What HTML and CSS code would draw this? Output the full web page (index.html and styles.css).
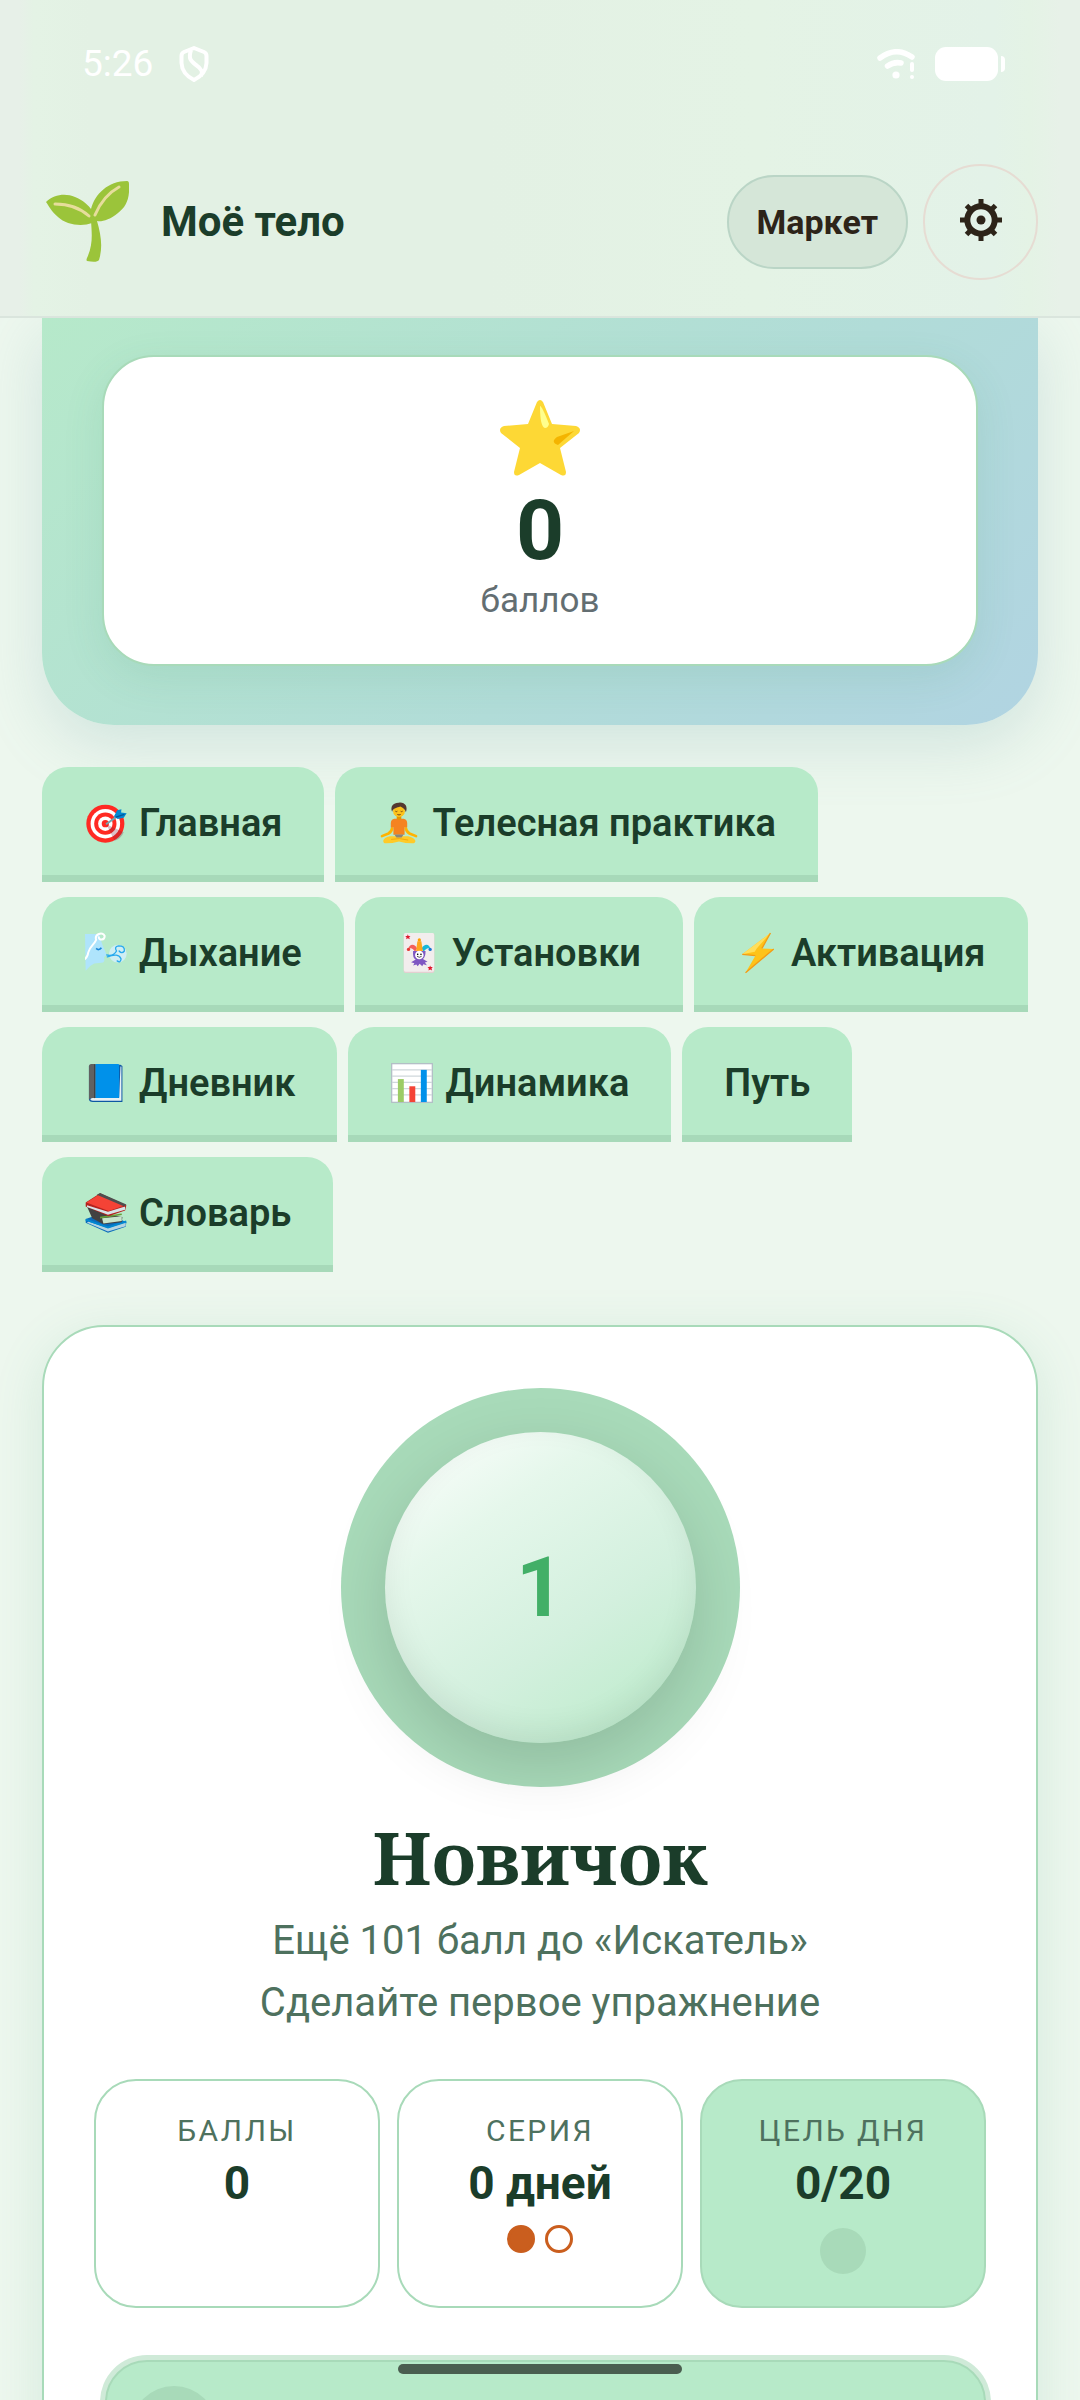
FILE: index.html
```html
<!DOCTYPE html>
<html lang="ru">
<head>
<meta charset="utf-8">
<meta name="viewport" content="width=device-width, initial-scale=1">
<title>Моё тело</title>
<link rel="stylesheet" href="styles.css">
</head>
<body>
<div class="app">
  <header class="header">
    <div class="status">
      <span class="status-time">5:26</span>
      <svg class="status-shield" viewBox="0 0 30 36" fill="none" stroke="#fff" stroke-width="4" stroke-linejoin="round"><path d="M15 2 L25 6 Q27.500 7 27.500 10 V17 Q27 28 15 34 Q3 28 2.500 17 V10 Q2.500 7 5 6 Z"/><path d="M12 4 C9 13 12 15 17 19 C23 23 24 26 22 30"/></svg>
      <svg class="status-wifi" viewBox="0 0 38 30" fill="none" stroke="#fff" stroke-linecap="round"><path d="M3 9 Q19 -3 35 8" stroke-width="5.500"/><path d="M10.500 17 Q17 12.500 24 14" stroke-width="5.500"/><circle cx="19" cy="26" r="3.600" fill="#fff" stroke="none"/><path d="M35 15 V21" stroke-width="4"/><circle cx="35" cy="28" r="2" fill="#fff" stroke="none"/></svg>
      <svg class="status-battery" viewBox="0 0 70 34" fill="#fff"><rect width="63" height="34" rx="11"/><path d="M66 9 Q70 9 70 13 V21 Q70 25 66 25 Z"/></svg>
    </div>
    <div class="topbar">
      <svg class="logo" viewBox="0 0 83 82" aria-hidden="true"><g fill="#9bc43a"><path d="M45 40 H51 C55 54 57 66 53 79 Q51 82 41 80 Q40 79 41 77 C47 64 46 54 45 40 Z"/><path d="M46 42 C36 46 20 44 12 36 C5 30 3 25 0 21 C8 13 20 12 29 16 C37 19 43 25 45 28 C49 13 62 0 81 0 Q83 0 83 3 C84 18 80 26 72 32 C64 39 55 41 51 40 Z"/></g><path d="M9 23 C22 23 33 26 43 35 M49 34 C54 22 62 12 73 6" fill="none" stroke="#e6dd9b" stroke-width="3" stroke-linecap="round"/></svg>
      <h1 class="brand">Моё тело</h1>
      <button class="market" type="button">Маркет</button>
      <button class="settings" type="button" aria-label="Настройки"><svg viewBox="0 0 42 42" fill="none" stroke="#2d2419"><circle cx="21" cy="21" r="13.700" stroke-width="6"/><path d="M21 0 V7 M21 35 V42 M0 21 H7 M35 21 H42 M6.500 6.500 L11 11 M31 31 L35.500 35.500 M35.500 6.500 L31 11 M11 31 L6.500 35.500" stroke-width="5"/><circle cx="21" cy="21" r="4.500" fill="#2d2419" stroke="none"/></svg></button>
    </div>
  </header>

  <main class="content">
    <section class="hero">
      <div class="score">
        <svg class="score-star" viewBox="0 0 80 76"><path d="M37 2 Q40 -2 43 2 L52 24 L76 26 Q82 28 79 33 L60 48 L66 72 Q66 77 61 75 L40 63 L19 75 Q14 77 14 72 L20 48 L1 33 Q-2 28 4 26 L28 24 Z" fill="#fdd835"/><path d="M40 6 Q42 6 49 24 Q48 28 45 28 Q40 27 40 6 Z" fill="#ffff8d"/><path d="M74 31 L58 45 Q50 42 57 37 Z" fill="#f4b400"/></svg>
        <strong class="score-value">0</strong>
        <span class="score-label">баллов</span>
      </div>
    </section>

    <nav class="tabs">
      <button class="tab" type="button"><svg viewBox="0 0 128 128"><circle cx="62" cy="66" r="58" fill="#ff2a23"/><circle cx="62" cy="66" r="45" fill="#fff"/><circle cx="62" cy="66" r="34" fill="#ff2a23"/><circle cx="62" cy="66" r="22" fill="#fff"/><circle cx="62" cy="66" r="11" fill="#ff2a23"/><path d="M65 68 L118 92 Q110 112 90 118 Z" fill="#7b1d3b" opacity=".28"/><path d="M64 68 L104 40" stroke="#78a3ad" stroke-width="6"/><path d="M88 44 L98 25 L111 22 L110 32 L127 34 L118 48 L100 52 Z" fill="#0288d1"/><path d="M94 46 L120 38" stroke="#01579b" stroke-width="4"/></svg>Главная</button>
      <button class="tab" type="button"><svg viewBox="0 0 128 128"><path d="M43 80 Q42 90 32 96 L12 104 M85 80 Q86 90 96 96 L116 104" fill="none" stroke="#ffb300" stroke-width="8" stroke-linecap="round"/><path d="M16 118 Q18 108 36 104 H92 Q110 108 114 118 Q114 126 104 126 Q84 126 64 120 Q44 126 24 126 Q16 126 16 118 Z" fill="#ffca28"/><path d="M39 64 Q40 52 50 51 H78 Q88 52 89 64 V78 L81 77 V100 H47 V77 L39 78 Z" fill="#f58320"/><path d="M50 99 H78 L72 108 H56 Z" fill="#8c857a"/><path d="M40 114 Q64 108 92 116" fill="none" stroke="#f2a90c" stroke-width="3"/><path d="M57 40 H71 V52 Q64 57 57 52 Z" fill="#e59600"/><circle cx="64" cy="28" r="18" fill="#fcc21b"/><path d="M43 30 C36 12 48 1 64 2 C82 0 92 14 85 31 C83 22 76 18 68 14 C58 18 46 18 43 30 Z" fill="#543930"/><path d="M53 28 Q56 31 59 28 M69 28 Q72 31 75 28 M59 38 Q64 41 69 38" fill="none" stroke="#704214" stroke-width="3"/></svg>Телесная практика</button>
      <button class="tab" type="button"><svg viewBox="0 0 128 128"><path d="M0 6 H44 Q50 34 58 50 L66 70 L58 76 Q62 94 50 94 L28 96 Q14 102 2 118 Z" fill="#afe4fc"/><path d="M34 24 C28 6 54 -2 60 12 C60 26 42 26 42 16 M34 24 C28 38 14 44 10 62 Q8 76 0 82" fill="none" stroke="#fff" stroke-width="6" stroke-linecap="round"/><path d="M34 50 Q42 58 50 48" fill="none" stroke="#1b87d8" stroke-width="5"/><circle cx="100" cy="66" r="27" fill="#d4efff" opacity=".8"/><path d="M66 70 Q86 76 96 58 Q88 44 102 42 Q122 42 120 58 Q112 68 104 58 M68 76 Q102 62 110 82 Q108 96 98 88" fill="none" stroke="#29a9ee" stroke-width="4" stroke-linecap="round"/></svg>Дыхание</button>
      <button class="tab" type="button"><svg viewBox="0 0 128 128"><rect x="17" y="3" width="94" height="122" rx="6" fill="#e4cfd0"/><rect x="18" y="3" width="92" height="118" rx="5" fill="#f2eded"/><g fill="#e0182d"><path d="M30 7 l2 5 6 0 -4 4 2 6 -6 -3 -5 3 1 -6 -4 -4 6 0z"/><path d="M98 102 l2 5 6 0 -4 4 2 6 -6 -3 -5 3 1 -6 -4 -4 6 0z"/></g><path d="M52 60 C46 50 38 46 32 53 C32 36 52 34 58 50 Z" fill="#f4605a"/><path d="M78 60 C86 50 92 46 98 53 C98 36 80 34 72 50 Z" fill="#18b8d8"/><circle cx="32" cy="53" r="5" fill="#e53935"/><circle cx="98" cy="53" r="5" fill="#1976d2"/><path d="M55 60 L59 28 H71 L76 60 Z" fill="#ffa51d"/><circle cx="65" cy="24" r="5" fill="#ffa000"/><path d="M46 58 Q44 80 54 84 L40 92 L50 95 L46 102 L56 99 L60 104 L66 97 L74 104 L77 98 L88 101 L82 93 L90 91 L76 82 Q84 76 84 58 Z" fill="#7e57c2"/><ellipse cx="65" cy="70" rx="13" ry="13" fill="#fff"/><circle cx="60" cy="68" r="2.500"/><circle cx="70" cy="68" r="2.500"/><path d="M58 74 Q65 80 72 74" fill="none" stroke="#333" stroke-width="2.500"/></svg>Установки</button>
      <button class="tab" type="button"><svg viewBox="0 0 128 128"><path d="M102 3 L16 68 L56 72 L26 124 L112 52 L76 50 Z" fill="#fec31a"/><path d="M102 3 L60 50 L54 60 L16 68 Z" fill="#ffdf5b"/><path d="M102 3 L76 50 M16 68 L56 72 M26 124 L112 52" fill="none" stroke="#f39b16" stroke-width="4"/></svg>Активация</button>
      <button class="tab" type="button"><svg viewBox="0 0 128 128"><path d="M17 8 H108 L114 12 V122 H24 Q12 122 12 112 V12 Z" fill="#0d57a3"/><path d="M108 14 H111 V118 H24 Q16 118 16 113 Q18 110 24 110 H104 Z" fill="#e8f1f5"/><rect x="30" y="6" width="74" height="104" rx="4" fill="#0091ea"/><path d="M12 12 Q13 6 19 6 H32 V110 H21 Q14 110 12 116 Z" fill="#616161"/><path d="M29 7 V110" stroke="#424242" stroke-width="3"/></svg>Дневник</button>
      <button class="tab" type="button"><svg viewBox="0 0 128 128"><rect x="2" y="5" width="124" height="118" fill="#fff" stroke="#b3bfc6" stroke-width="4"/><path d="M3 24 H125 M3 43 H125 M3 62 H125 M3 81 H125 M3 100 H125" stroke="#cfd8dc" stroke-width="4"/><rect x="21" y="52" width="18" height="70" fill="#9ccc65"/><rect x="56" y="74" width="18" height="48" fill="#f44336"/><rect x="91" y="24" width="18" height="98" fill="#0091ea"/></svg>Динамика</button>
      <button class="tab" type="button" aria-current="page">Путь</button>
      <button class="tab" type="button"><svg viewBox="0 0 128 128"><path d="M2 82 L62 62 L126 92 L124 106 L70 124 L2 94 Z" fill="#0b6bbb"/><path d="M10 90 L70 110 L124 92 V104 L70 120 L6 94 Z" fill="#b6d4e0"/><path d="M2 84 L70 108 L126 90" fill="none" stroke="#0288d1" stroke-width="6"/><path d="M6 44 L84 70 L114 76 L112 92 L56 98 L22 80 Z" fill="#424242"/><path d="M52 80 L112 74 V88 L56 96 Z" fill="#c7e5cb"/><path d="M46 78 L112 68" stroke="#689f38" stroke-width="5"/><path d="M46 4 L126 40 L122 56 L72 74 L2 44 V32 Z" fill="#b3221e"/><path d="M6 40 L70 60 L122 44 V54 L70 69 L6 46 Z" fill="#d8e3e7"/><path d="M46 6 L124 40 L72 58 L4 32 Z" fill="#f44336"/><path d="M36 8 L46 3 L126 38 L120 44 Z" fill="#4e4e4e"/></svg>Словарь</button>
    </nav>

    <section class="level">
      <div class="ring"><div class="ring-core">1</div></div>
      <h2 class="level-name">Новичок</h2>
      <p class="level-note">Ещё 101 балл до «Искатель»</p>
      <p class="level-note">Сделайте первое упражнение</p>
      <div class="stats">
        <div class="stat">
          <span class="stat-label">Баллы</span>
          <strong class="stat-value">0</strong>
        </div>
        <div class="stat">
          <span class="stat-label">Серия</span>
          <strong class="stat-value">0 дней</strong>
          <div class="streak"><i class="dot dot-full"></i><i class="dot"></i></div>
        </div>
        <div class="stat stat-goal">
          <span class="stat-label">Цель дня</span>
          <strong class="stat-value">0/20</strong>
          <i class="goal-mark"></i>
        </div>
      </div>
      <div class="quest"><i class="quest-mark"></i></div>
    </section>
  </main>
  <div class="home-bar"></div>
</div>
</body>
</html>
```
FILE: styles.css
```css
* { box-sizing: border-box; }

body {
  margin: 0;
  background: #edf7ee;
  color: #1b3d2a;
  font-family: Roboto, "Noto Sans", sans-serif;
}

button {
  margin: 0;
  font-family: inherit;
  cursor: pointer;
}

h1, h2, p { margin: 0; }

.app {
  position: relative;
  height: 100vh;
  overflow: hidden;
}

.header {
  position: relative;
  z-index: 2;
  padding: 47px 42px 36px;
  border-bottom: 2px solid #dae5dd;
  background: linear-gradient(90deg, #e7f0e8 0, #e7f0e8 20px, #e4f3e5 34px, #e3f1e4 90px, #e3f1e4 45%, #e4f3e5 70%, #e3f2e8 92%, #e4f3e5 calc(100% - 50px), #e7f1e8 calc(100% - 20px));
}

.status {
  display: flex;
  align-items: center;
  height: 34px;
  padding: 0 33px 0 40px;
}

.status-time {
  color: #fff;
  font-size: 37px;
  line-height: 34px;
}

.status-shield { width: 30px; height: 36px; margin-left: 26px; }
.status-wifi { width: 38px; height: 30px; margin-left: auto; }
.status-battery { width: 70px; height: 34px; margin-left: 20px; }

.topbar {
  display: flex;
  align-items: center;
  margin-top: 83px;
}

.logo { width: 83px; height: 82px; margin-left: 4px; }

.brand {
  flex: 1;
  margin-left: 32px;
  font-size: 42px;
  font-weight: 700;
  line-height: 56px;
}

.market {
  height: 94px;
  padding: 0 28px;
  border: 2px solid #bad5c6;
  border-radius: 47px;
  background: #d5e6d8;
  color: #2d2419;
  font-size: 34px;
  font-weight: 700;
}

.settings {
  display: flex;
  align-items: center;
  justify-content: center;
  width: 115px;
  height: 116px;
  margin-left: 15px;
  padding: 0 0 4px;
  border: 2px solid #e6dcd3;
  border-radius: 58px;
  background: transparent;
}

.settings svg { width: 42px; height: 42px; }

.content { padding: 0 42px; }

.hero {
  padding: 37px 60px 59px;
  border-radius: 0 0 72px 72px;
  background: linear-gradient(135deg, #b6e9ca, #b1dcd8 60%, #b1d4e2);
  box-shadow: 0 20px 60px rgba(110, 165, 170, .22);
}

.score {
  display: flex;
  flex-direction: column;
  align-items: center;
  padding: 43px 40px 40px;
  border: 2px solid #a8dab9;
  border-radius: 52px;
  background: #fff;
  box-shadow: 0 12px 40px rgba(60, 150, 100, .12);
}

.score-star { width: 80px; height: 76px; }

.score-value {
  margin-top: 9px;
  font-size: 84px;
  line-height: 92px;
}

.score-label {
  color: #636e72;
  font-size: 35px;
  line-height: 47px;
}

.tabs {
  display: flex;
  flex-wrap: wrap;
  gap: 15px 11px;
  margin-top: 42px;
}

.tab {
  display: flex;
  align-items: center;
  gap: 12px;
  height: 115px;
  padding: 4px 42px 0;
  border: 0;
  border-bottom: 7px solid #a7d9b9;
  border-radius: 26px 26px 0 0;
  background: #b7eac9;
  color: #1b3d2a;
  font-size: 38px;
  font-weight: 600;
}

.tab svg { width: 42px; height: 42px; margin-left: 1px; }

.level {
  display: flex;
  flex-direction: column;
  align-items: center;
  margin-top: 53px;
  padding: 61px 50px 80px;
  border: 2px solid #a8dab9;
  border-radius: 62px;
  background: #fff;
  box-shadow: 0 12px 50px rgba(80, 170, 130, .16);
}

.ring {
  display: grid;
  place-items: center;
  width: 399px;
  height: 399px;
  border-radius: 50%;
  background: #a8dab9;
}

.ring-core {
  display: grid;
  place-items: center;
  width: 311px;
  height: 311px;
  border-radius: 50%;
  background: linear-gradient(145deg, #fff, #e5f7eb 30%, #d3f0de 62%, #c0ecce 88%);
  box-shadow: 0 22px 64px rgba(0, 0, 0, .14), inset 0 -10px 30px rgba(0, 0, 0, .07);
  color: #42af67;
  font-size: 84px;
  font-weight: 700;
  line-height: 96px;
}

.level-name {
  margin-top: 20px;
  font-family: "Noto Serif", "PT Serif", "Liberation Serif", serif;
  font-size: 73px;
  font-weight: 700;
  line-height: 100px;
  padding-bottom: 3px;
}

.level-note {
  color: #4e715e;
  font-size: 40px;
  line-height: 62px;
}

.stats {
  display: grid;
  grid-template-columns: repeat(3, 1fr);
  gap: 17px;
  width: 100%;
  margin-top: 45px;
}

.stat {
  display: flex;
  flex-direction: column;
  align-items: center;
  height: 229px;
  padding-top: 30px;
  border: 2px solid #a8dab9;
  border-radius: 42px;
}

.stat-goal { background: #b7eac9; }

.stat-label {
  color: #4e715e;
  font-size: 30px;
  letter-spacing: .08em;
  line-height: 40px;
  text-transform: uppercase;
}

.stat-value {
  margin-top: 2px;
  font-size: 46px;
  line-height: 60px;
}

.streak {
  display: flex;
  gap: 10px;
  margin-top: 12px;
}

.dot {
  width: 28px;
  height: 28px;
  border: 3px solid #ca5e1e;
  border-radius: 50%;
}

.dot-full { background: #ca5e1e; }

.goal-mark {
  width: 46px;
  height: 46px;
  margin-top: 15px;
  border-radius: 50%;
  background: #a8dab9;
}

.quest {
  align-self: stretch;
  height: 200px;
  margin: 52px 0 0 11px;
  padding: 24px;
  border: 2px solid #a8dab9;
  border-radius: 42px;
  background: #b7eac9;
  box-shadow: 0 0 0 5px #cfead8;
}

.quest-mark {
  display: block;
  width: 86px;
  height: 86px;
  border-radius: 50%;
  background: #a8dab9;
}

.home-bar {
  position: absolute;
  bottom: 26px;
  left: 50%;
  width: 284px;
  height: 10px;
  margin-left: -142px;
  border-radius: 5px;
  background: #4a5e50;
}
```
